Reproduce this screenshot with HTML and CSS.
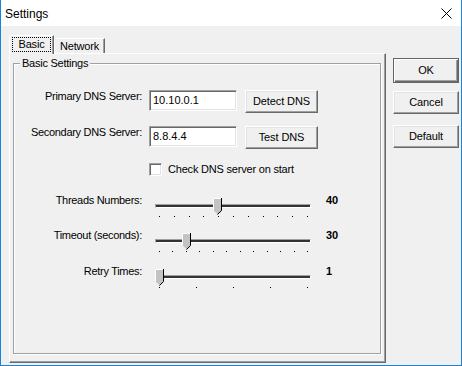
FILE: index.html
```html
<!DOCTYPE html>
<html>
<head>
<meta charset="utf-8">
<title>Settings</title>
<link rel="stylesheet" href="styles.css">
</head>
<body>
<div class="window">
  <div class="titlebar">
    <span class="title">Settings</span>
    <svg class="close" width="11" height="11" viewBox="0 0 11 11"><path d="M0.5 0.5L10.5 10.5M10.5 0.5L0.5 10.5" stroke="#000" stroke-width="1"/></svg>
  </div>
  <div class="client">
    <div class="tabctl">
      <div class="tabs">
        <div class="tab sel"><span class="focus">Basic</span></div>
        <div class="tab">Network</div>
      </div>
      <div class="page">
        <fieldset class="group">
          <legend>Basic Settings</legend>
          <div class="row r1">
            <span class="lbl">Primary DNS Server:</span>
            <div class="edit">10.10.0.1</div>
            <button class="btn act">Detect DNS</button>
          </div>
          <div class="row r2">
            <span class="lbl">Secondary DNS Server:</span>
            <div class="edit">8.8.4.4</div>
            <button class="btn act">Test DNS</button>
          </div>
          <div class="chkrow">
            <span class="box"></span>
            <span class="chklbl">Check DNS server on start</span>
          </div>
          <div class="srow s1">
            <span class="lbl">Threads Numbers:</span>
            <div class="slider">
              <div class="track"></div>
              <svg class="thumb" style="left:58px" width="9" height="17" viewBox="0 0 9 17"><polygon points="0,0 9,0 9,12.5 4.5,17 0,12.5" fill="#c3c3c3"/><path d="M0.5 12.5V0.5H8.5" stroke="#fff" fill="none"/><path d="M0.5 12.5L4.5 16.5" stroke="#e8e8e8" fill="none"/><path d="M8.5 0V12.5L4.5 16.5" stroke="#000" fill="none"/></svg>
              <div class="ticks t11"><i></i><i></i><i></i><i></i><i></i><i></i><i></i><i></i><i></i><i></i><i></i></div>
            </div>
            <b class="val">40</b>
          </div>
          <div class="srow s2">
            <span class="lbl">Timeout (seconds):</span>
            <div class="slider">
              <div class="track"></div>
              <svg class="thumb" style="left:27px" width="9" height="17" viewBox="0 0 9 17"><polygon points="0,0 9,0 9,12.5 4.5,17 0,12.5" fill="#c3c3c3"/><path d="M0.5 12.5V0.5H8.5" stroke="#fff" fill="none"/><path d="M0.5 12.5L4.5 16.5" stroke="#e8e8e8" fill="none"/><path d="M8.5 0V12.5L4.5 16.5" stroke="#000" fill="none"/></svg>
              <div class="ticks t12"><i></i><i></i><i></i><i></i><i></i><i></i><i></i><i></i><i></i><i></i><i></i><i></i></div>
            </div>
            <b class="val">30</b>
          </div>
          <div class="srow s3">
            <span class="lbl">Retry Times:</span>
            <div class="slider">
              <div class="track"></div>
              <svg class="thumb" style="left:0px" width="9" height="17" viewBox="0 0 9 17"><polygon points="0,0 9,0 9,12.5 4.5,17 0,12.5" fill="#c3c3c3"/><path d="M0.5 12.5V0.5H8.5" stroke="#fff" fill="none"/><path d="M0.5 12.5L4.5 16.5" stroke="#e8e8e8" fill="none"/><path d="M8.5 0V12.5L4.5 16.5" stroke="#000" fill="none"/></svg>
              <div class="ticks t5"><i></i><i></i><i></i><i></i><i></i></div>
            </div>
            <b class="val">1</b>
          </div>
        </fieldset>
      </div>
    </div>
    <div class="buttons">
      <button class="btn side ok">OK</button>
      <button class="btn side cancel">Cancel</button>
      <button class="btn side dflt">Default</button>
    </div>
  </div>
</div>
</body>
</html>
```

FILE: styles.css
```css
html, body {
  margin: 0;
  padding: 0;
  background: #f0f0f0;
}
body {
  font-family: "Liberation Sans", Arial, sans-serif;
  font-size: 11px;
  line-height: 13px;
  color: #000;
}
.window {
  width: 462px;
  height: 366px;
  box-sizing: border-box;
  border: 1px solid #1883d7;
  border-top: none;
  display: flex;
  flex-direction: column;
  background: #f0f0f0;
}
.titlebar {
  height: 26px;
  flex: none;
  background: #fff;
  display: flex;
  align-items: center;
  justify-content: space-between;
  padding: 0 9px 0 4px;
}
.title {
  font-size: 12px;
  line-height: 14px;
  margin-top: 1px;
}
.close {
  display: block;
}
.client {
  flex: 1;
  display: flex;
  align-items: flex-start;
  padding: 9px 2px 2px 8px;
}
.tabctl {
  width: 377px;
  display: flex;
  flex-direction: column;
}
.tabs {
  height: 18px;
  display: flex;
  align-items: flex-end;
}
.tab {
  box-sizing: border-box;
  height: 15px;
  width: 51px;
  text-align: center;
  line-height: 13px;
  border-top: 1px solid #fff;
  border-left: 1px solid #fff;
  border-right: 1px solid #696969;
  box-shadow: inset -1px 0 0 #a0a0a0;
  background: #f0f0f0;
  padding-top: 1px;
  letter-spacing: -0.2px;
}
.tab.sel {
  height: 19px;
  width: 45px;
  margin-bottom: -1px;
  position: relative;
  z-index: 1;
  padding: 1px 2px 1px 1px;
}
.focus {
  display: block;
  height: 15px;
  line-height: 15px;
  outline: 1px dotted #000;
  outline-offset: -1px;
  margin-left: 1px;
}
.page {
  box-sizing: border-box;
  height: 310px;
  border-top: 1px solid #fff;
  border-left: 1px solid #fff;
  border-right: 1px solid #696969;
  border-bottom: 1px solid #696969;
  box-shadow: inset -1px -1px 0 #a0a0a0;
  display: flex;
  flex-direction: column;
}
.group {
  flex: 1;
  min-width: 0;
  margin: 3px 4px 8px 3px;
  padding: 0;
  border: 1px solid #a0a0a0;
  box-shadow: inset 1px 1px 0 #fff, 1px 1px 0 #fff;
  display: flex;
  flex-direction: column;
}
.group legend {
  margin-left: 6px;
  padding: 0 2px;
  line-height: 13px;
  background: #f0f0f0;
  letter-spacing: -0.25px;
}
.row {
  display: flex;
  align-items: flex-start;
  height: 23px;
}
.r1 { margin-top: 20px; }
.r2 { margin-top: 13px; }
.lbl {
  width: 128px;
  text-align: right;
  flex: none;
  white-space: nowrap;
  letter-spacing: -0.3px;
}
.edit {
  box-sizing: border-box;
  width: 88px;
  height: 21px;
  margin-left: 7px;
  background: #fff;
  border: 1px solid;
  border-color: #a0a0a0 #fff #fff #a0a0a0;
  box-shadow: inset 1px 1px 0 #696969, inset -1px -1px 0 #e3e3e3;
  padding: 3px 0 0 3px;
  line-height: 13px;
}
.btn {
  box-sizing: border-box;
  font: inherit;
  color: #000;
  background: #f0f0f0;
  border: 1px solid;
  border-color: #fff #696969 #696969 #fff;
  box-shadow: inset -1px -1px 0 #a0a0a0, inset 1px 1px 0 #e3e3e3;
  padding: 0;
  margin: 0;
  line-height: 13px;
  border-radius: 0;
  letter-spacing: -0.1px;
}
.act {
  width: 73px;
  height: 23px;
  margin-left: 8px;
}
.chkrow {
  display: flex;
  align-items: flex-start;
  height: 13px;
  margin-top: 14px;
  padding-left: 135px;
}
.box {
  box-sizing: border-box;
  width: 13px;
  height: 13px;
  background: #fff;
  border: 1px solid;
  border-color: #a0a0a0 #fff #fff #a0a0a0;
  box-shadow: inset 1px 1px 0 #696969, inset -1px -1px 0 #e3e3e3;
}
.chklbl {
  margin-left: 6px;
  line-height: 13px;
  letter-spacing: -0.2px;
}
.srow {
  display: flex;
  align-items: flex-start;
  height: 35px;
}
.s1 { margin-top: 18px; }
.s3 { margin-top: 1px; }
.slider {
  position: relative;
  width: 156px;
  height: 20px;
  margin-left: 13px;
  margin-top: 4px;
  flex: none;
}
.track {
  box-sizing: border-box;
  margin-top: 6px;
  height: 4px;
  background: #333;
  border: 1px solid;
  border-color: #a0a0a0 #fff #fff #a0a0a0;
}
.thumb {
  position: absolute;
  top: 0;
  display: block;
}
.ticks {
  display: flex;
  justify-content: space-between;
  margin: 8px 0 0 4px;
  width: 149px;
}
.ticks i {
  display: block;
  width: 1px;
  height: 1px;
  background: #000;
}
.val {
  margin-left: 15px;
  font-weight: bold;
  line-height: 13px;
}
.buttons {
  width: 66px;
  margin-left: 7px;
  display: flex;
  flex-direction: column;
}
.side {
  width: 66px;
  height: 23px;
}
.ok {
  margin-top: 23px;
  height: 25px;
  border: 1px solid #646464;
  box-shadow: inset 1px 1px 0 #fff, inset -1px -1px 0 #696969, inset -2px -2px 0 #a0a0a0;
}
.cancel { margin-top: 8px; }
.dflt { margin-top: 11px; }
```
